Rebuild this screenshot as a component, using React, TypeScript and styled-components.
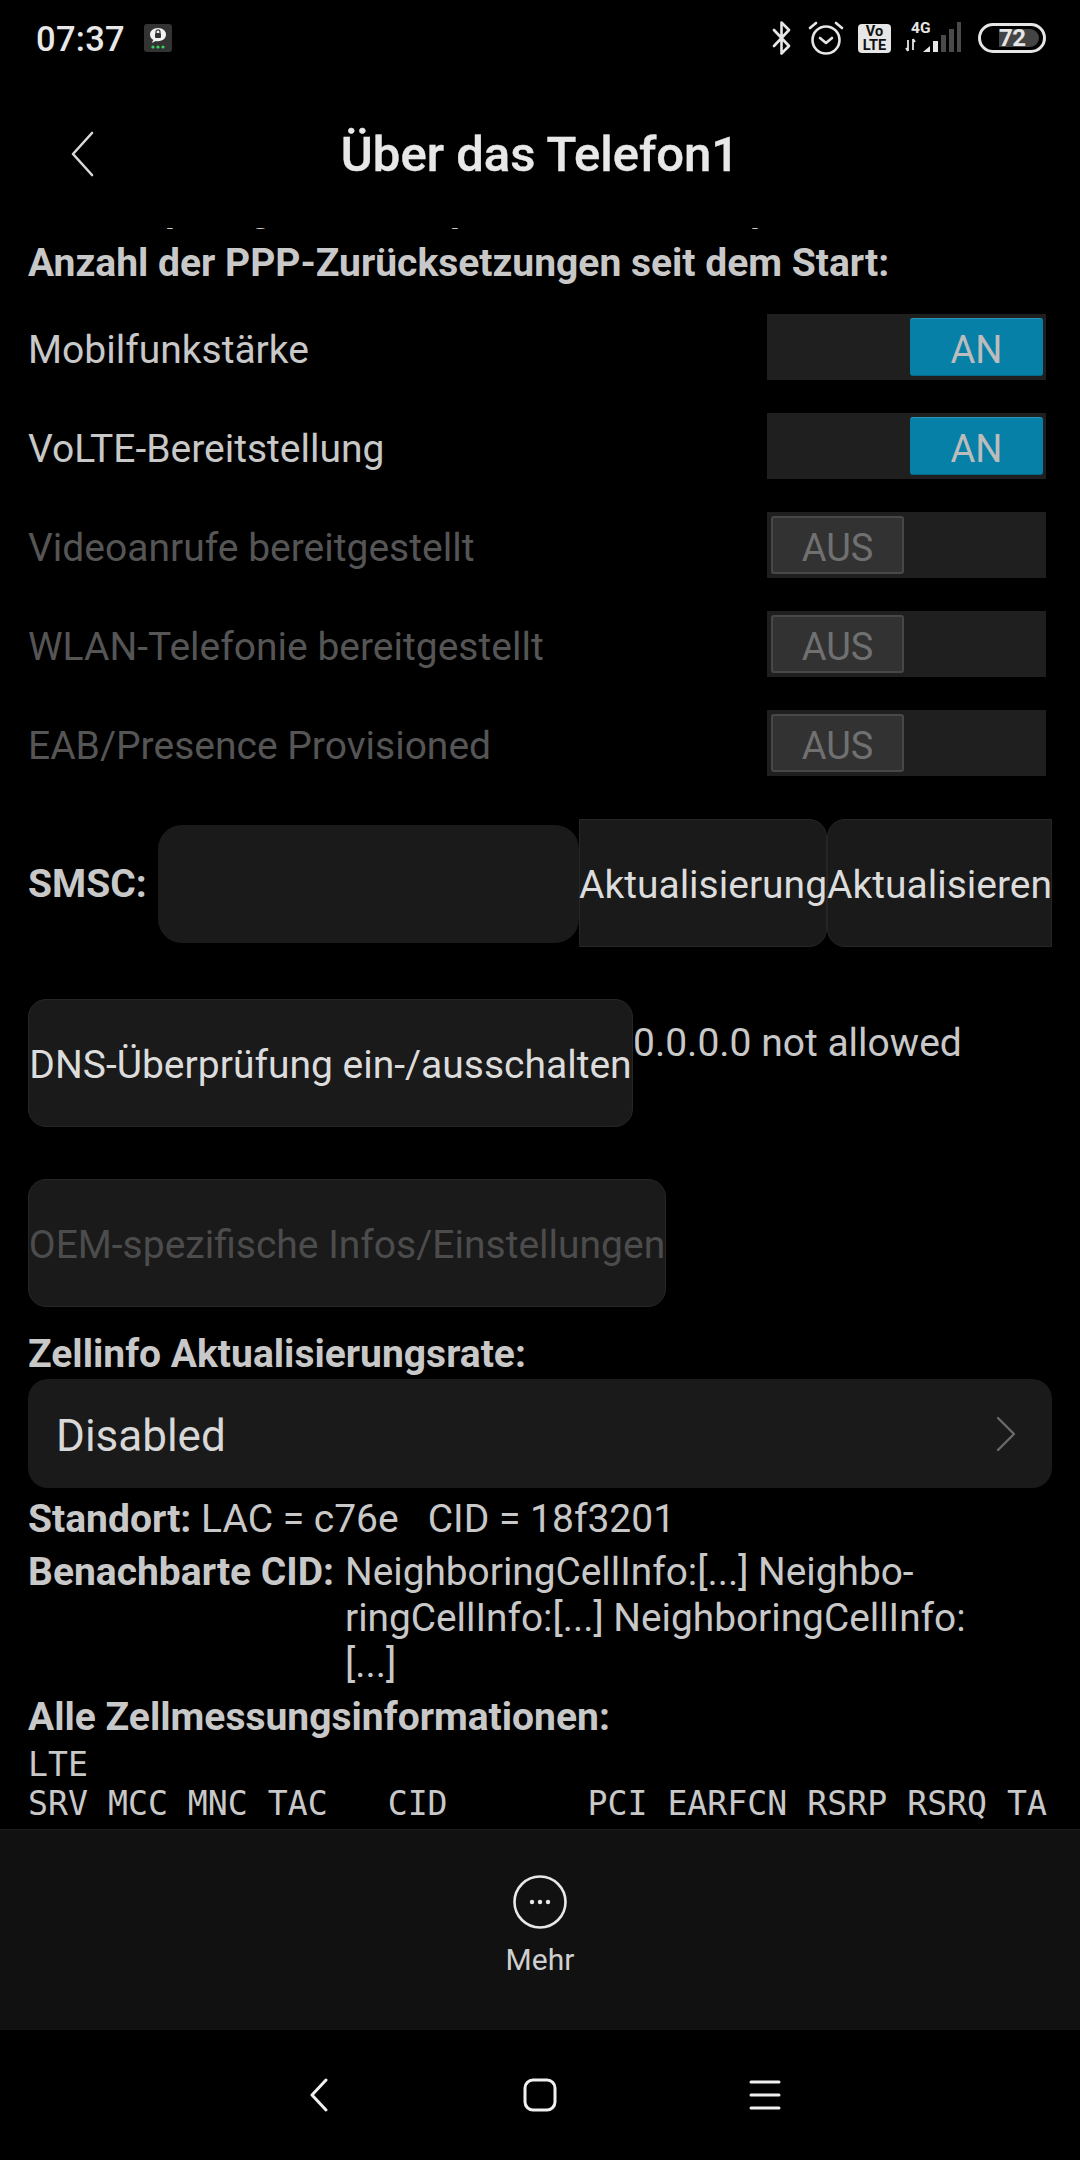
import React from "react";
import styled, { createGlobalStyle } from "styled-components";

const Global = createGlobalStyle`
  html, body { margin: 0; padding: 0; background: #000; }
  * { box-sizing: border-box; }
`;

const Page = styled.div`
  width: 1080px;
  height: 2160px;
  background: #000;
  display: flex;
  flex-direction: column;
  font-family: Roboto, "Noto Sans", sans-serif;
  overflow: hidden;
`;

const StatusBar = styled.div`
  height: 76px;
  flex: none;
  display: flex;
  align-items: center;
  padding: 0 34px 0 36px;
`;
const Time = styled.span`
  font-size: 34.5px;
  font-weight: 500;
  color: #e8e8e8;
  letter-spacing: 0.3px;
  padding-top: 1px;
`;
const NotifIcon = styled.svg`
  margin-left: 19px;
  width: 28px;
  height: 28px;
`;
const StatusIcons = styled.div`
  margin-left: auto;
  display: flex;
  align-items: center;
`;
const VoLte = styled.div`
  width: 33px;
  height: 29px;
  margin-left: 14px;
  border-radius: 4px;
  background: #e6e6e6;
  color: #111;
  font-size: 14.5px;
  line-height: 14px;
  font-weight: 700;
  text-align: center;
  padding-top: 1px;
`;
const SignalWrap = styled.div`
  position: relative;
  margin-left: 14px;
  width: 56px;
  height: 34px;
`;
const FourG = styled.span`
  position: absolute;
  left: 6px;
  top: 0;
  font-size: 15.5px;
  line-height: 14px;
  font-weight: 700;
  color: #e6e6e6;
`;
const Battery = styled.div`
  position: relative;
  margin-left: 17px;
  width: 68px;
  height: 30px;
  border: 3px solid #e6e6e6;
  border-radius: 15px;
  display: flex;
  align-items: center;
  padding-left: 18px;
`;
const BatteryFill = styled.div`
  position: absolute;
  left: 18px;
  top: 3px;
  bottom: 3px;
  right: 4px;
  background: #444;
  border-radius: 0 9px 9px 0;
`;
const BatteryText = styled.span`
  position: relative;
  font-size: 24px;
  font-weight: 700;
  color: #e6e6e6;
  letter-spacing: -0.5px;
`;

const Header = styled.div`
  height: 152px;
  flex: none;
  display: grid;
  grid-template-columns: 1fr auto 1fr;
  align-items: center;
  padding-top: 4px;
`;
const BackButton = styled.svg`
  width: 24px;
  height: 46px;
  margin-left: 70px;
`;
const Title = styled.h1`
  margin: 0;
  font-size: 49px;
  font-weight: 500;
  color: #e8e8e8;
  -webkit-text-stroke: 0.4px #e8e8e8;
`;

const Scroll = styled.div`
  flex: 1;
  min-height: 0;
  overflow: hidden;
  padding: 0 28px;
`;
const Cut = styled.div`
  height: 3px;
  overflow: hidden;
  display: grid;
  grid-template-columns: 85px 200px 300px 40px;
  margin-left: 137px;
  font-size: 39px;
  font-weight: 700;
  color: #c8c8c8;
  line-height: 39px;
  span { margin-top: -39px; display: block; }
`;
const Strong = styled.div<{ $mt: number }>`
  margin-top: ${p => p.$mt}px;
  margin-bottom: -1px;
  padding-top: 1px;
  font-size: 39px;
  line-height: 46px;
  font-weight: 700;
  color: #c8c8c8;
  white-space: pre;
`;
const ToggleRow = styled.div<{ $mt: number }>`
  margin-top: ${p => p.$mt}px;
  height: 66px;
  display: flex;
  align-items: center;
  justify-content: space-between;
  padding-right: 6px;
`;
const RowLabel = styled.span<{ $off?: boolean }>`
  font-size: 39px;
  padding-top: 5px;
  color: ${p => (p.$off ? "#555" : "#c8c8c8")};
`;
const Track = styled.div<{ $on?: boolean }>`
  width: 279px;
  height: 66px;
  background: #1f1f1f;
  padding: 4px 3px 4px 4px;
  display: flex;
  justify-content: ${p => (p.$on ? "flex-end" : "flex-start")};
`;
const Thumb = styled.div<{ $on?: boolean }>`
  width: 133px;
  height: 58px;
  border-radius: 3px;
  display: flex;
  align-items: center;
  justify-content: center;
  padding-top: 5px;
  font-size: 38px;
  color: ${p => (p.$on ? "#bcbcbc" : "#707070")};
  background: ${p => (p.$on ? "#0780a8" : "#323232")};
  border: ${p => (p.$on ? "0" : "2px solid #484848")};
  border-top: ${p => (p.$on ? "1px solid #2c94b8" : "2px solid #484848")};
  border-bottom: ${p => (p.$on ? "1px solid #06698a" : "2px solid #484848")};
`;
const SmscRow = styled.div`
  margin-top: 43px;
  height: 128px;
  display: flex;
  align-items: center;
`;
const SmscLabel = styled.span`
  font-size: 39px;
  font-weight: 700;
  color: #c8c8c8;
  width: 130px;
  padding-top: 2px;
`;
const EditField = styled.div`
  width: 421px;
  height: 118px;
  margin-top: 2px;
  border-radius: 24px;
  background: #1a1a1a;
`;
const ActionButton = styled.div<{ $w: number; $r: string; $off?: boolean }>`
  flex: none;
  width: ${p => p.$w}px;
  height: 128px;
  background: #1a1a1a;
  border: 1px solid #262626;
  border-radius: ${p => p.$r};
  display: flex;
  align-items: center;
  justify-content: center;
  padding-top: 4px;
  font-size: 39px;
  white-space: nowrap;
  color: ${p => (p.$off ? "#4c4c4c" : "#dcdcdc")};
`;
const DnsRow = styled.div`
  margin-top: 52px;
  display: flex;
  align-items: flex-start;
`;
const DnsValue = styled.span`
  margin-top: 21px;
  line-height: 46px;
  font-size: 39px;
  color: #c8c8c8;
`;
const OemRow = styled.div`
  margin-top: 52px;
  display: flex;
`;
const Spinner = styled.div`
  margin-top: 3px;
  height: 109px;
  border-radius: 20px;
  background: #1a1a1a;
  display: flex;
  align-items: center;
  justify-content: space-between;
  padding: 5px 36px 0 28px;
  font-size: 44px;
  color: #d8d8d8;
`;
const Chevron = styled.svg`
  width: 20px;
  height: 36px;
  margin-top: -5px;
`;
const InfoLine = styled.div<{ $mt: number }>`
  margin-top: ${p => p.$mt}px;
  margin-bottom: -1px;
  padding-top: 1px;
  display: flex;
  line-height: 46px;
  font-size: 39px;
  color: #c8c8c8;
  white-space: pre;
`;
const InfoLabel = styled.b`
  font-weight: 700;
`;
const NeighborLabel = styled(InfoLabel)`
  width: 317px;
  flex: none;
`;
const NeighborValue = styled.div`
  white-space: pre-line;
  font-size: 38.8px;
`;
const Mono = styled.pre`
  margin: 6px 0 0;
  font-family: "DejaVu Sans Mono", monospace;
  font-size: 33.2px;
  line-height: 39px;
  color: #c8c8c8;
`;

const BottomBar = styled.div`
  height: 201px;
  flex: none;
  background: #111;
  border-top: 1px solid #1e1e1e;
  display: flex;
  flex-direction: column;
  align-items: center;
  padding-top: 45px;
`;
const MoreIcon = styled.svg`
  width: 54px;
  height: 54px;
`;
const MoreLabel = styled.span`
  margin-top: 13px;
  font-size: 30px;
  color: #cfcfcf;
`;
const NavBar = styled.div`
  height: 130px;
  flex: none;
  display: flex;
  align-items: center;
  justify-content: center;
  padding-left: 11px;
`;
const NavIcon = styled.svg<{ $w: number; $ml?: number }>`
  width: ${p => p.$w}px;
  height: 34px;
  margin-left: ${p => p.$ml ?? 0}px;
`;

const Toggle = ({ on }: { on?: boolean }) => (
  <Track $on={on}>
    <Thumb $on={on}>{on ? "AN" : "AUS"}</Thumb>
  </Track>
);

export default function App() {
  return (
    <Page>
      <Global />
      <StatusBar>
        <Time>07:37</Time>
        <NotifIcon viewBox="0 0 28 28">
          <rect width="28" height="28" rx="3" fill="#333" />
          <path d="M14 4c-5 0-8 3-8 6.500 0 2.400 1.400 4.300 3.400 5.400L7.600 19l4.200-2c.7.100 1.400.200 2.200.200 5 0 8-3 8-6.600S19 4 14 4z" fill="#f2f2f2" />
          <rect x="11" y="9" width="6" height="5" rx="1" fill="#333" />
          <path d="M12 9V7.800a2 2 0 0 1 4 0V9" fill="none" stroke="#333" strokeWidth="1.200" />
          <circle cx="9" cy="23" r="1.600" fill="#35d05e" />
          <circle cx="14" cy="23" r="1.600" fill="#35d05e" />
          <circle cx="19" cy="23" r="1.600" fill="#35d05e" />
        </NotifIcon>
        <StatusIcons>
          <svg width="20" height="34" viewBox="0 0 20 34" fill="none" stroke="#e6e6e6" strokeWidth="2.600" strokeLinejoin="round" strokeLinecap="round">
            <path d="M2 9l15 16-7.500 7.500V1.500L17 9 2 25" />
          </svg>
          <svg width="36" height="34" viewBox="0 0 36 34" fill="none" stroke="#e6e6e6" strokeWidth="2.600" strokeLinecap="round" strokeLinejoin="round" style={{ marginLeft: 16 }}>
            <circle cx="18" cy="19" r="13.500" />
            <path d="M12 17l6 5 6-5" />
            <path d="M2 7l6-5M34 7l-6-5" />
          </svg>
          <VoLte>Vo<br />LTE</VoLte>
          <SignalWrap>
            <FourG>4G</FourG>
            <svg width="56" height="34" viewBox="0 0 56 34">
              <path d="M3 19v11M3 30l-2-3M8 18v11M8 18l2 3" stroke="#e6e6e6" strokeWidth="1.800" fill="none" />
              <path d="M18 31l7-6v6z" fill="#e6e6e6" />
              <rect x="28" y="20" width="5" height="11" fill="#e6e6e6" />
              <rect x="36" y="14" width="5" height="17" fill="#4a4a4a" />
              <rect x="44" y="8" width="5" height="23" fill="#4a4a4a" />
              <rect x="52" y="1" width="4" height="30" fill="#4a4a4a" />
            </svg>
          </SignalWrap>
          <Battery>
            <BatteryFill />
            <BatteryText>72</BatteryText>
          </Battery>
        </StatusIcons>
      </StatusBar>

      <Header>
        <BackButton viewBox="0 0 24 46" fill="none" stroke="#d8d8d8" strokeWidth="2.600" strokeLinecap="round" strokeLinejoin="round">
          <path d="M22 2L3 23l19 21" />
        </BackButton>
        <Title>Über das Telefon1</Title>
      </Header>

      <Scroll>
        <Cut>
          <span>p</span>
          <span>g</span>
          <span>p</span>
          <span>y</span>
        </Cut>
        <Strong $mt={8}>Anzahl der PPP-Zurücksetzungen seit dem Start:</Strong>
        <ToggleRow $mt={29}>
          <RowLabel>Mobilfunkstärke</RowLabel>
          <Toggle on />
        </ToggleRow>
        <ToggleRow $mt={33}>
          <RowLabel>VoLTE-Bereitstellung</RowLabel>
          <Toggle on />
        </ToggleRow>
        <ToggleRow $mt={33}>
          <RowLabel $off>Videoanrufe bereitgestellt</RowLabel>
          <Toggle />
        </ToggleRow>
        <ToggleRow $mt={33}>
          <RowLabel $off>WLAN-Telefonie bereitgestellt</RowLabel>
          <Toggle />
        </ToggleRow>
        <ToggleRow $mt={33}>
          <RowLabel $off>EAB/Presence Provisioned</RowLabel>
          <Toggle />
        </ToggleRow>

        <SmscRow>
          <SmscLabel>SMSC:</SmscLabel>
          <EditField />
          <ActionButton $w={248} $r="0 18px 18px 0">Aktualisierung</ActionButton>
          <ActionButton $w={225} $r="18px 0 0 18px">Aktualisieren</ActionButton>
        </SmscRow>

        <DnsRow>
          <ActionButton $w={605} $r="18px">DNS-Überprüfung ein-/ausschalten</ActionButton>
          <DnsValue>0.0.0.0 not allowed</DnsValue>
        </DnsRow>
        <OemRow>
          <ActionButton $w={638} $r="18px" $off>OEM-spezifische Infos/Einstellungen</ActionButton>
        </OemRow>

        <Strong $mt={23}>Zellinfo Aktualisierungsrate:</Strong>
        <Spinner>
          Disabled
          <Chevron viewBox="0 0 20 36" fill="none" stroke="#6a6a6a" strokeWidth="2.400" strokeLinecap="round" strokeLinejoin="round">
            <path d="M2 2l16 16L2 34" />
          </Chevron>
        </Spinner>
        <InfoLine $mt={7}>
          <InfoLabel>Standort: </InfoLabel>LAC = c76e   CID = 18f3201
        </InfoLine>
        <InfoLine $mt={7}>
          <NeighborLabel>Benachbarte CID:</NeighborLabel>
          <NeighborValue>{"NeighboringCellInfo:[...] Neighbo-\nringCellInfo:[...] NeighboringCellInfo:\n[...]"}</NeighborValue>
        </InfoLine>
        <Strong $mt={7}>Alle Zellmessungsinformationen:</Strong>
        <Mono>{"LTE\nSRV MCC MNC TAC   CID       PCI EARFCN RSRP RSRQ TA"}</Mono>
      </Scroll>

      <BottomBar>
        <MoreIcon viewBox="0 0 54 54" fill="none">
          <circle cx="27" cy="27" r="25.500" stroke="#e8e8e8" strokeWidth="2.600" />
          <circle cx="19" cy="27" r="2.200" fill="#e8e8e8" />
          <circle cx="27" cy="27" r="2.200" fill="#e8e8e8" />
          <circle cx="35" cy="27" r="2.200" fill="#e8e8e8" />
        </MoreIcon>
        <MoreLabel>Mehr</MoreLabel>
      </BottomBar>

      <NavBar>
        <NavIcon $w={18} viewBox="0 0 18 34" fill="none" stroke="#f0f0f0" strokeWidth="3" strokeLinecap="round" strokeLinejoin="round">
          <path d="M16 2L2 17l14 15" />
        </NavIcon>
        <NavIcon $w={34} $ml={195} viewBox="0 0 34 34" fill="none" stroke="#f0f0f0" strokeWidth="3">
          <rect x="2" y="2" width="30" height="30" rx="8" />
        </NavIcon>
        <NavIcon $w={32} $ml={192} viewBox="0 0 32 34" fill="none" stroke="#f0f0f0" strokeWidth="3" strokeLinecap="round">
          <path d="M2 4h28M2 17h28M2 30h28" />
        </NavIcon>
      </NavBar>
    </Page>
  );
}
